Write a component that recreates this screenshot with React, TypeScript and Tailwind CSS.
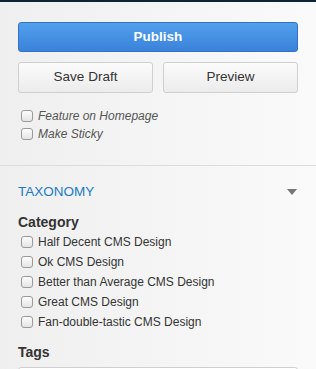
import type { ReactNode } from "react";

const categories = [
  "Half Decent CMS Design",
  "Ok CMS Design",
  "Better than Average CMS Design",
  "Great CMS Design",
  "Fan-double-tastic CMS Design",
];

function Box() {
  return (
    <span className="inline-block h-[12px] w-[12px] shrink-0 rounded-[3px] border border-[#9a9a9a] bg-gradient-to-b from-[#fdfdfd] to-[#e4e4e4]" />
  );
}

function Check({ children, italic }: { children: ReactNode; italic?: boolean }) {
  return (
    <label className="flex items-center gap-[5px] pl-[3px]">
      <Box />
      <span className={italic ? "italic text-[#555]" : "text-[#333]"}>{children}</span>
    </label>
  );
}

export default function App() {
  return (
    <div className="h-[369px] w-[316px] overflow-hidden bg-gradient-to-r from-[#efefef] to-[#fafafa] font-['Liberation_Sans',Arial,sans-serif] text-[12px]">
      <div className="h-[2px] bg-[#0d2434]" />

      <div className="px-[18px] pt-[20px]">
        <button
          type="button"
          className="flex h-[30px] w-full items-center justify-center rounded-[3px] border border-[#3272c4] bg-gradient-to-b from-[#51a0ec] to-[#3a82da] text-[13.5px] font-bold text-white"
        >
          Publish
        </button>

        <div className="mt-[10px] grid grid-cols-2 gap-[10px]">
          <button
            type="button"
            className="h-[31px] rounded-[3px] border border-[#cfcfcf] bg-gradient-to-b from-[#fbfbfb] to-[#ececec] text-[13.5px] text-[#333]"
          >
            Save Draft
          </button>
          <button
            type="button"
            className="h-[31px] rounded-[3px] border border-[#cfcfcf] bg-gradient-to-b from-[#fbfbfb] to-[#ececec] text-[13.5px] text-[#333]"
          >
            Preview
          </button>
        </div>

        <div className="mt-[14px] flex flex-col leading-[18px]">
          <Check italic>Feature on Homepage</Check>
          <Check italic>Make Sticky</Check>
        </div>
      </div>

      <div className="mt-[22px] border-t border-[#dcdcdc]" />

      <div className="px-[18px] pt-[17px]">
        <div className="flex items-center justify-between">
          <span className="text-[13.5px] leading-[18px] text-[#1a7cc2]">TAXONOMY</span>
          <span className="mr-[1px] h-0 w-0 border-x-[5px] border-t-[6px] border-x-transparent border-t-[#777]" />
        </div>

        <div className="mt-[12px] text-[14px] font-bold leading-[18px] text-[#333]">Category</div>
        <div className="mt-[1px] flex flex-col leading-[20px]">
          {categories.map((c) => (
            <Check key={c}>{c}</Check>
          ))}
        </div>

        <div className="mt-[11px] text-[14px] font-bold leading-[18px] text-[#333]">Tags</div>
        <div className="mt-[6px] h-[30px] rounded-[3px] border border-[#cfcfcf] bg-white" />
      </div>
    </div>
  );
}
